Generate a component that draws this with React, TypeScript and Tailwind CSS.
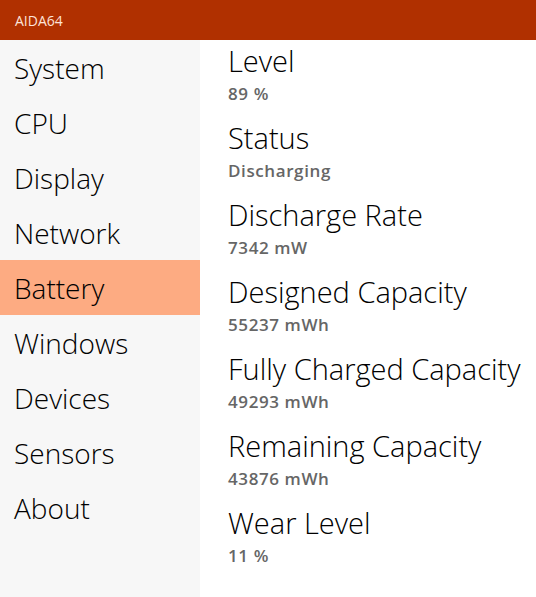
const nav = ["System","CPU","Display","Network","Battery","Windows","Devices","Sensors","About"];
const items: [string,string][] = [
  ["Level","89 %"],
  ["Status","Discharging"],
  ["Discharge Rate","7342 mW"],
  ["Designed Capacity","55237 mWh"],
  ["Fully Charged Capacity","49293 mWh"],
  ["Remaining Capacity","43876 mWh"],
  ["Wear Level","11 %"],
];
export default function App() {
  return (
    <div className="w-[536px] h-[597px] flex flex-col overflow-hidden bg-white" style={{fontFamily:'"Open Sans","Noto Sans",sans-serif'}}>
      <div className="h-[40px] bg-[#b03000] flex items-center px-[15px] text-[14px] text-[#fde3d8] shrink-0">AIDA64</div>
      <div className="flex flex-1">
        <div className="w-[200px] bg-[#f7f7f7] flex flex-col">
          {nav.map(n => (
            <div key={n} className={`h-[55px] leading-[56px] pl-[14px] text-[28px] font-light text-black ${n==="Battery" ? "bg-[#fdab82]" : ""}`}>{n}</div>
          ))}
        </div>
        <div className="flex-1 flex flex-col pl-[28px] pt-[4px]">
          {items.map(([l,v]) => (
            <div key={l} className="h-[77px] flex flex-col">
              <div className="text-[29px] font-light leading-[34px] text-black whitespace-nowrap">{l}</div>
              <div className="mt-[6px] text-[17px] font-semibold tracking-[0.6px] leading-[20px] text-[#666]">{v}</div>
            </div>
          ))}
        </div>
      </div>
    </div>
  );
}
